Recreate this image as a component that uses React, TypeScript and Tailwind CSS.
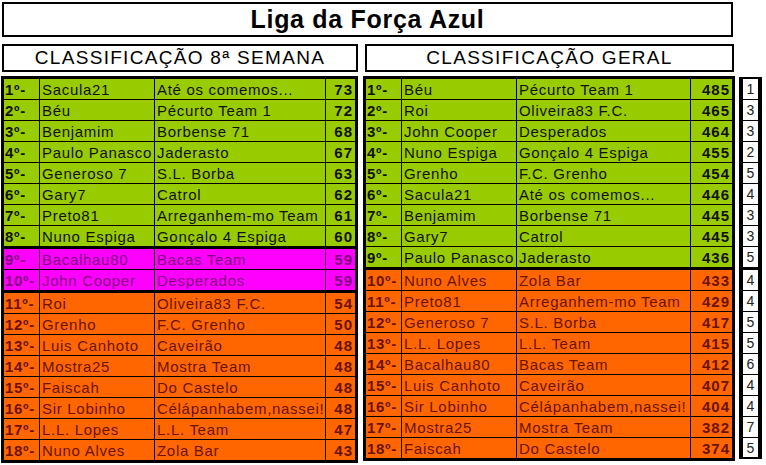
type Row = { pos: string; name: string; team: string; pts: number; tone: "green" | "pink" | "orange"; sep?: boolean };

const semana: Row[] = [
  { pos: "1º-", name: "Sacula21", team: "Até os comemos...", pts: 73, tone: "green" },
  { pos: "2º-", name: "Béu", team: "Pécurto Team 1", pts: 72, tone: "green" },
  { pos: "3º-", name: "Benjamim", team: "Borbense 71", pts: 68, tone: "green" },
  { pos: "4º-", name: "Paulo Panasco", team: "Jaderasto", pts: 67, tone: "green" },
  { pos: "5º-", name: "Generoso 7", team: "S.L. Borba", pts: 63, tone: "green" },
  { pos: "6º-", name: "Gary7", team: "Catrol", pts: 62, tone: "green" },
  { pos: "7º-", name: "Preto81", team: "Arreganhem-mo Team", pts: 61, tone: "green" },
  { pos: "8º-", name: "Nuno Espiga", team: "Gonçalo 4 Espiga", pts: 60, tone: "green", sep: true },
  { pos: "9º-", name: "Bacalhau80", team: "Bacas Team", pts: 59, tone: "pink" },
  { pos: "10º-", name: "John Cooper", team: "Desperados", pts: 59, tone: "pink", sep: true },
  { pos: "11º-", name: "Roi", team: "Oliveira83 F.C.", pts: 54, tone: "orange" },
  { pos: "12º-", name: "Grenho", team: "F.C. Grenho", pts: 50, tone: "orange" },
  { pos: "13º-", name: "Luis Canhoto", team: "Caveirão", pts: 48, tone: "orange" },
  { pos: "14º-", name: "Mostra25", team: "Mostra Team", pts: 48, tone: "orange" },
  { pos: "15º-", name: "Faiscah", team: "Do Castelo", pts: 48, tone: "orange" },
  { pos: "16º-", name: "Sir Lobinho", team: "Célápanhabem,nassei!", pts: 48, tone: "orange" },
  { pos: "17º-", name: "L.L. Lopes", team: "L.L. Team", pts: 47, tone: "orange" },
  { pos: "18º-", name: "Nuno Alves", team: "Zola Bar", pts: 43, tone: "orange" },
];

const geral: Row[] = [
  { pos: "1º-", name: "Béu", team: "Pécurto Team 1", pts: 485, tone: "green" },
  { pos: "2º-", name: "Roi", team: "Oliveira83 F.C.", pts: 465, tone: "green" },
  { pos: "3º-", name: "John Cooper", team: "Desperados", pts: 464, tone: "green" },
  { pos: "4º-", name: "Nuno Espiga", team: "Gonçalo 4 Espiga", pts: 455, tone: "green" },
  { pos: "5º-", name: "Grenho", team: "F.C. Grenho", pts: 454, tone: "green" },
  { pos: "6º-", name: "Sacula21", team: "Até os comemos...", pts: 446, tone: "green" },
  { pos: "7º-", name: "Benjamim", team: "Borbense 71", pts: 445, tone: "green" },
  { pos: "8º-", name: "Gary7", team: "Catrol", pts: 445, tone: "green" },
  { pos: "9º-", name: "Paulo Panasco", team: "Jaderasto", pts: 436, tone: "green", sep: true },
  { pos: "10º-", name: "Nuno Alves", team: "Zola Bar", pts: 433, tone: "orange" },
  { pos: "11º-", name: "Preto81", team: "Arreganhem-mo Team", pts: 429, tone: "orange" },
  { pos: "12º-", name: "Generoso 7", team: "S.L. Borba", pts: 417, tone: "orange" },
  { pos: "13º-", name: "L.L. Lopes", team: "L.L. Team", pts: 415, tone: "orange" },
  { pos: "14º-", name: "Bacalhau80", team: "Bacas Team", pts: 412, tone: "orange" },
  { pos: "15º-", name: "Luis Canhoto", team: "Caveirão", pts: 407, tone: "orange" },
  { pos: "16º-", name: "Sir Lobinho", team: "Célápanhabem,nassei!", pts: 404, tone: "orange" },
  { pos: "17º-", name: "Mostra25", team: "Mostra Team", pts: 382, tone: "orange" },
  { pos: "18º-", name: "Faiscah", team: "Do Castelo", pts: 374, tone: "orange" },
];

const subidas = [1, 3, 3, 2, 5, 4, 3, 3, 5, 4, 4, 5, 5, 6, 4, 4, 7, 5];

const toneClass = {
  green: "bg-[#99cc00] text-[#111]",
  pink: "bg-[#ff00ff] text-[#800080]",
  orange: "bg-[#ff6600] text-[#6b1200]",
};

function Table({ rows, cols }: { rows: Row[]; cols: string }) {
  return (
    <div className="border-[3px] border-black">
      {rows.map((r, i) => {
        const last = i === rows.length - 1;
        return (
          <div
            key={r.pos}
            className={`grid ${cols} ${toneClass[r.tone]} ${
              last ? "h-[20px]" : r.sep ? "h-[23px] border-b-[3px] border-black" : "h-[21px] border-b border-black"
            }`}
          >
            <div className="flex items-center border-r border-black pl-[1px] font-bold">{r.pos}</div>
            <div className="flex items-center overflow-hidden whitespace-nowrap border-r border-black pl-[2px]">{r.name}</div>
            <div className="flex items-center overflow-hidden whitespace-nowrap border-r border-black pl-[2px]">{r.team}</div>
            <div className="flex items-center justify-end pr-[2px] font-bold tracking-[1px]">{r.pts}</div>
          </div>
        );
      })}
    </div>
  );
}

export default function App() {
  return (
    <div className="h-[465px] w-[766px] overflow-hidden bg-white pl-[1px] pt-[2px] font-['Liberation_Sans',Arial,sans-serif] text-black">
      <div className="ml-[1px] flex h-[35px] w-[731px] items-center justify-center border-2 border-black text-[25px] font-bold tracking-[0.7px]">
        Liga da Força Azul
      </div>

      <div className="mt-[7px] flex gap-[7px] pl-[1px]">
        <div className="flex h-[28px] w-[356px] items-center justify-center border-2 border-black pt-[1px] text-[19px] tracking-[1.3px]">
          CLASSIFICAÇÃO 8ª SEMANA
        </div>
        <div className="flex h-[28px] w-[369px] items-center justify-center border-2 border-black pt-[1px] text-[19px] tracking-[1.3px]">
          CLASSIFICAÇÃO GERAL
        </div>
      </div>

      <div className="mt-[4px] flex items-start text-[15px] leading-none tracking-[0.7px]">
        <div className="w-[357px]">
          <Table rows={semana} cols="grid-cols-[36px_115px_171px_29px]" />
        </div>
        <div className="ml-[5px] w-[372px]">
          <Table rows={geral} cols="grid-cols-[36px_115px_174px_41px]" />
        </div>
        <div className="ml-[4px] mt-[1px] w-[23px] border-x-[4px] border-y-[2px] border-black bg-white">
          {subidas.map((n, i) => (
            <div
              key={i}
              className={`flex items-center justify-center text-[14px] tracking-normal text-[#222] ${
                i === subidas.length - 1 ? "h-[19px]" : i === 8 ? "h-[23px] border-b-[3px] border-black" : "h-[21px] border-b border-black"
              }`}
            >
              {n}
            </div>
          ))}
        </div>
      </div>
    </div>
  );
}
